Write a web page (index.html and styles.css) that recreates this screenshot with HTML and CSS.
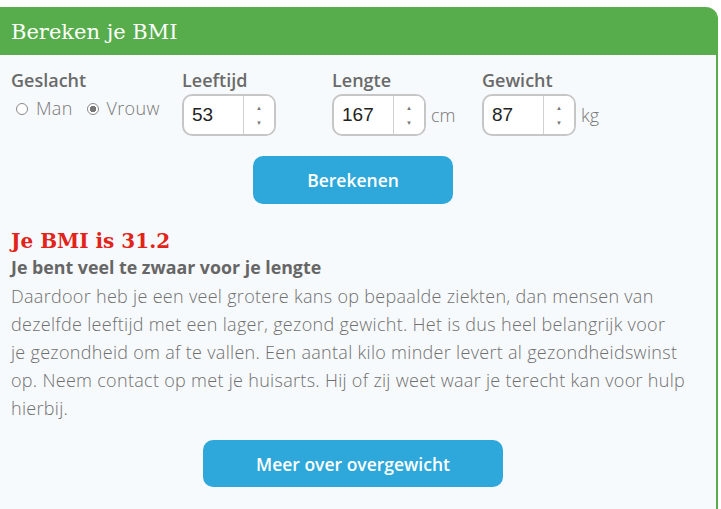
FILE: index.html
```html
<!DOCTYPE html>
<html lang="nl">
<head>
    <meta charset="UTF-8">
    <meta name="viewport" content="width=device-width, initial-scale=1.0">
    <title>BMI berekenen</title>
    <link rel="stylesheet" href="styles.css">
</head>
<body>

    <div class="bmi-card">
        <div class="bmi-header">
            <h2>Bereken je BMI</h2>
        </div>

        <div class="bmi-body">
            <form class="bmi-form">
                <div class="field field-gender">
                    <span class="field-label">Geslacht</span>
                    <div class="radios">
                        <label class="radio"><span class="dot"></span>Man</label>
                        <label class="radio"><span class="dot checked"></span>Vrouw</label>
                    </div>
                </div>
                <div class="field">
                    <span class="field-label">Leeftijd</span>
                    <div class="number-row">
                        <div class="number-box">
                            <span class="number-value">53</span>
                            <span class="spinner"><span class="up">&#9650;</span><span class="down">&#9660;</span></span>
                        </div>
                    </div>
                </div>
                <div class="field">
                    <span class="field-label">Lengte</span>
                    <div class="number-row">
                        <div class="number-box">
                            <span class="number-value">167</span>
                            <span class="spinner"><span class="up">&#9650;</span><span class="down">&#9660;</span></span>
                        </div>
                        <span class="unit">cm</span>
                    </div>
                </div>
                <div class="field">
                    <span class="field-label">Gewicht</span>
                    <div class="number-row">
                        <div class="number-box">
                            <span class="number-value">87</span>
                            <span class="spinner"><span class="up">&#9650;</span><span class="down">&#9660;</span></span>
                        </div>
                        <span class="unit">kg</span>
                    </div>
                </div>
            </form>

            <div class="button-row">
                <button type="button" class="btn btn-calc">Berekenen</button>
            </div>

            <div class="result">
                <h3>Je BMI is 31.2</h3>
                <p class="result-title">Je bent veel te zwaar voor je lengte</p>
                <p class="result-text">Daardoor heb je een veel grotere kans op bepaalde ziekten, dan mensen van<br>
                dezelfde leeftijd met een lager, gezond gewicht. Het is dus heel belangrijk voor<br>
                je gezondheid om af te vallen. Een aantal kilo minder levert al gezondheidswinst<br>
                op. Neem contact op met je huisarts. Hij of zij weet waar je terecht kan voor hulp<br>
                hierbij.</p>
            </div>

            <div class="button-row">
                <button type="button" class="btn btn-more">Meer over overgewicht</button>
            </div>
        </div>
    </div>

</body>
</html>
```

FILE: styles.css
```css
body {
    font-family: "Open Sans", Arial, sans-serif;
    background-color: #fff;
    margin: 0;
    padding: 0;
}
.bmi-card {
    width: 716px;
    margin-top: 7px;
    border-right: 2px solid #57ad4b;
    border-top-right-radius: 12px;
    background-color: #f7fafc;
    min-height: 502px;
}
.bmi-header {
    background-color: #57ad4b;
    height: 48px;
    display: flex;
    align-items: center;
    padding-left: 11px;
    border-top-right-radius: 10px;
}
.bmi-header h2 {
    margin: 0;
    color: #fff;
    font-family: "DejaVu Serif", serif;
    font-weight: normal;
    font-size: 21px;
    padding-top: 1px;
}
.bmi-body {
    padding: 15px 10px 0 11px;
}
.bmi-form {
    display: flex;
}
.field {
    width: 150px;
    display: flex;
    flex-direction: column;
}
.field-gender {
    width: 171px;
}
.field-label {
    font-weight: 600;
    font-size: 18px;
    color: #6a6a6a;
    line-height: 20px;
}
.radios {
    display: flex;
    gap: 14px;
    margin-top: 6px;
    padding-left: 5px;
}
.radio {
    display: flex;
    align-items: center;
    font-size: 18px;
    font-weight: 300;
    color: #777;
    letter-spacing: 0.3px;
}
.dot {
    width: 12px;
    height: 12px;
    border: 1px solid #888;
    border-radius: 50%;
    margin-right: 8px;
    box-sizing: border-box;
    background-color: #fff;
    position: relative;
    top: 1px;
}
.dot.checked {
    background: radial-gradient(circle, #777 0 3px, #fff 3.5px);
}
.number-row {
    display: flex;
    align-items: center;
    margin-top: 4px;
}
.number-box {
    width: 94px;
    height: 42px;
    box-sizing: border-box;
    border: 2px solid #c6c6c6;
    border-radius: 10px;
    background-color: #fff;
    display: flex;
    overflow: hidden;
}
.number-value {
    flex: 1;
    font-family: "Liberation Sans", Arial, sans-serif;
    font-size: 19px;
    color: #222;
    padding-left: 8px;
    line-height: 38px;
}
.spinner {
    width: 30px;
    border-left: 1px solid #d0d0d0;
    background-color: #fff;
    display: flex;
    flex-direction: column;
    justify-content: space-around;
    align-items: center;
    font-size: 6px;
    color: #777;
    padding: 4px 0;
}
.unit {
    font-size: 18px;
    font-weight: 300;
    color: #777;
    margin-left: 5px;
}
.button-row {
    display: flex;
    justify-content: center;
    padding-right: 11px;
}
.btn {
    background-color: #2ea8db;
    color: #fff;
    border: none;
    border-radius: 10px;
    font-family: "Open Sans", Arial, sans-serif;
    font-size: 17.5px;
    font-weight: 600;
    cursor: pointer;
}
.btn-calc {
    width: 200px;
    height: 48px;
    margin-top: 20px;
}
.btn-more {
    width: 300px;
    height: 47px;
    margin-top: 18px;
}
.result {
    margin-top: 24px;
}
.result h3 {
    margin: 0;
    color: #e2231a;
    font-family: "DejaVu Serif", serif;
    font-weight: bold;
    font-size: 20px;
    line-height: 26px;
}
.result-title {
    margin: 2px 0 0 0;
    font-weight: 700;
    font-size: 17.8px;
    color: #666;
    line-height: 22px;
}
.result-text {
    margin: 4px 0 0 0;
    font-size: 18px;
    font-weight: 300;
    letter-spacing: 0.3px;
    color: #707070;
    line-height: 28px;
    white-space: nowrap;
}
```
